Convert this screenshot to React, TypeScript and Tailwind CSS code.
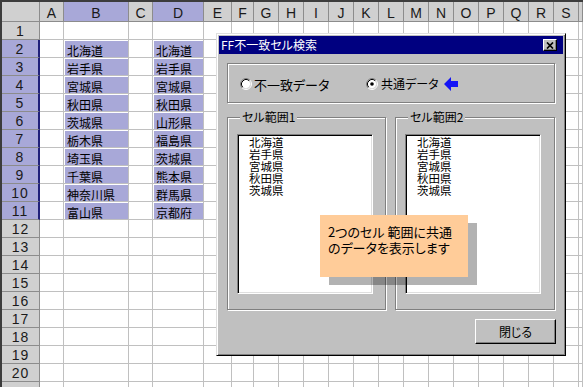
import React from 'react';

const COLS = ['A','B','C','D','E','F','G','H','I','J','K','L','M','N','O','P','Q','R','S','T'];
const LIST_B = ['北海道','岩手県','宮城県','秋田県','茨城県','栃木県','埼玉県','千葉県','神奈川県','富山県'];
const LIST_D = ['北海道','岩手県','宮城県','秋田県','山形県','福島県','茨城県','熊本県','群馬県','京都府'];
const COMMON = ['北海道','岩手県','宮城県','秋田県','茨城県'];

function Sheet() {
  const cells: React.ReactNode[] = [];
  cells.push(<div key="corner" className="bg-[#d0d0d0] border-r border-b border-[#8c8c8c]" />);
  for (const c of COLS) {
    const sel = c === 'B' || c === 'D';
    cells.push(
      <div
        key={`h-${c}`}
        className={
          sel
            ? "flex items-end justify-center bg-[#a8a8d8] border-r border-b border-[#8c8c8c] text-[14px] leading-none text-[#1a1a1a] pb-px"
            : "flex items-end justify-center bg-[#d0d0d0] border-r border-b border-[#8c8c8c] text-[14px] leading-none text-[#1a1a1a] pb-px"
        }
      >
        {c === 'T' ? '' : c}
      </div>
    );
  }
  for (let r = 1; r <= 21; r++) {
    const selRow = r >= 2 && r <= 11;
    cells.push(
      <div
        key={`r-${r}`}
        className={
          selRow
            ? "flex items-end justify-center bg-[#a8a8d8] border-r-2 border-r-[#20207a] border-b border-b-[#8c8c8c] text-[14px] leading-none tracking-[1px] text-[#1a1a1a] pb-px"
            : "flex items-end justify-center bg-[#d0d0d0] border-r border-b border-[#8c8c8c] text-[14px] leading-none tracking-[1px] text-[#1a1a1a] pb-px"
        }
      >
        {r <= 20 ? r : ''}
      </div>
    );
    COLS.forEach((c) => {
      const val = selRow && c === 'B' ? LIST_B[r - 2] : selRow && c === 'D' ? LIST_D[r - 2] : null;
      if (val !== null) {
        cells.push(
          <div key={`c-${r}-${c}`} className="border-r border-b border-[#c0c0c0] pt-px pl-px">
            <div className="h-full bg-[#a8a8d8] flex items-end pl-[2px] text-[12px] leading-none text-black font-['Noto_Sans_CJK_JP',sans-serif]">
              {val}
            </div>
          </div>
        );
      } else {
        cells.push(<div key={`c-${r}-${c}`} className="border-r border-b border-[#c0c0c0]" />);
      }
    });
  }
  return (
    <div className="border-t-2 border-l-2 border-[#3c3c3c] h-full font-['Liberation_Sans',sans-serif]">
      <div className="grid grid-cols-[38px_24px_65px_24px_51px_28px_22px_repeat(13,25px)_1fr] grid-rows-[20px_repeat(21,18px)]">
        {cells}
      </div>
    </div>
  );
}

function Radio({ checked }: { checked: boolean }) {
  return (
    <svg width="12" height="12" viewBox="0 0 12 12" className="shrink-0">
      <circle cx="6" cy="6" r="4.2" fill="#fff" />
      <path d="M2.11 9.89 A5.5 5.5 0 0 1 9.89 2.11" fill="none" stroke="#808080" strokeWidth="1" />
      <path d="M9.89 2.11 A5.5 5.5 0 0 1 2.11 9.89" fill="none" stroke="#ffffff" strokeWidth="1" />
      <path d="M2.82 9.18 A4.5 4.5 0 0 1 9.18 2.82" fill="none" stroke="#000" strokeWidth="1" />
      <path d="M9.18 2.82 A4.5 4.5 0 0 1 2.82 9.18" fill="none" stroke="#dfdfdf" strokeWidth="1" />
      {checked && <circle cx="6" cy="6" r="1.8" fill="#000" />}
    </svg>
  );
}

function GroupBox({ title, w, children }: { title: string; w: string; children: React.ReactNode }) {
  return (
    <div className={`relative border border-[#808080] shadow-[inset_1px_1px_0_#fff,1px_1px_0_#fff] h-[193px] pl-[9px] pt-[16px] ${w}`}>
      <span className="absolute left-[12px] top-[-8px] bg-[#c0c0c0] px-[2px] text-[12px] leading-[14px] text-black whitespace-nowrap">
        {title}
      </span>
      {children}
    </div>
  );
}

function ListBox() {
  return (
    <div className="w-[136px] h-[160px] bg-white border border-t-[#808080] border-l-[#808080] border-b-white border-r-white shadow-[inset_1px_1px_0_#000,inset_-1px_-1px_0_#dfdfdf] pl-[11px] pt-px text-[11.5px] leading-[12px] text-black">
      {COMMON.map((t) => (
        <div key={t}>{t}</div>
      ))}
    </div>
  );
}

function Dialog() {
  return (
    <div className="absolute left-[216px] top-[33px] w-[350px] h-[323px] bg-[#c0c0c0] border border-t-[#dfdfdf] border-l-[#dfdfdf] border-r-black border-b-black shadow-[inset_1px_1px_0_#fff,inset_-1px_-1px_0_#808080] p-[2px] flex flex-col font-['Noto_Sans_CJK_JP',sans-serif] [font-feature-settings:'palt']">
      <div className="h-[18px] bg-[#000080] flex items-center justify-between pl-[2px] pr-[6px]">
        <span className="text-white text-[12px] leading-none whitespace-nowrap">FF不一致セル検索</span>
        <div className="w-[14px] h-[12px] bg-[#c0c0c0] border border-t-white border-l-white border-r-black border-b-black shadow-[inset_-1px_-1px_0_#808080] flex items-center justify-center">
          <svg width="8" height="7" viewBox="0 0 8 7">
            <path d="M1 0.5 L7 6.5 M7 0.5 L1 6.5" stroke="#000" strokeWidth="1.7" />
          </svg>
        </div>
      </div>
      <div className="pl-[8px] pt-[9px] flex flex-col">
        <div className="border border-[#808080] shadow-[inset_1px_1px_0_#fff,1px_1px_0_#fff] w-[328px] h-[40px] flex items-center pl-[12px] pt-[2px]">
          <div className="w-[126px] flex items-center gap-[2px]">
            <Radio checked={false} />
            <span className="text-[13px] leading-none text-black whitespace-nowrap">不一致データ</span>
          </div>
          <div className="flex items-center gap-[3px]">
            <Radio checked={true} />
            <span className="text-[12px] leading-none text-black whitespace-nowrap">共通データ</span>
            <svg width="15" height="14" viewBox="0 0 15 14" className="ml-[2px] blur-[0.4px]">
              <polygon points="0,7 7,0 7,4 14,4 14,10 7,10 7,14" fill="#1414f5" />
            </svg>
          </div>
        </div>
        <div className="flex gap-[9px] mt-[14px]">
          <GroupBox title="セル範囲1" w="w-[159px]">
            <ListBox />
          </GroupBox>
          <GroupBox title="セル範囲2" w="w-[160px]">
            <ListBox />
          </GroupBox>
        </div>
        <div className="w-[329px] flex justify-end mt-[9px]">
          <div className="w-[81px] h-[25px] border border-t-white border-l-white border-r-black border-b-black shadow-[inset_-1px_-1px_0_#808080] flex items-center justify-center text-[12px] leading-none text-black">
            閉じる
          </div>
        </div>
      </div>
    </div>
  );
}

export default function App() {
  return (
    <div className="relative w-[583px] h-[387px] overflow-hidden bg-white">
      <Sheet />
      <Dialog />
      <div className="absolute left-[320px] top-[215px] w-[148px] h-[62px] bg-[#ffcc99] shadow-[9px_8px_0_rgba(0,0,0,0.3)] pl-[8px] pt-[9px] text-[13px] leading-[16px] text-black font-['Noto_Sans_CJK_JP',sans-serif] [font-feature-settings:'palt'] whitespace-nowrap">
        <div>2つのセル 範囲に共通</div>
        <div>のデータを表示します</div>
      </div>
    </div>
  );
}
